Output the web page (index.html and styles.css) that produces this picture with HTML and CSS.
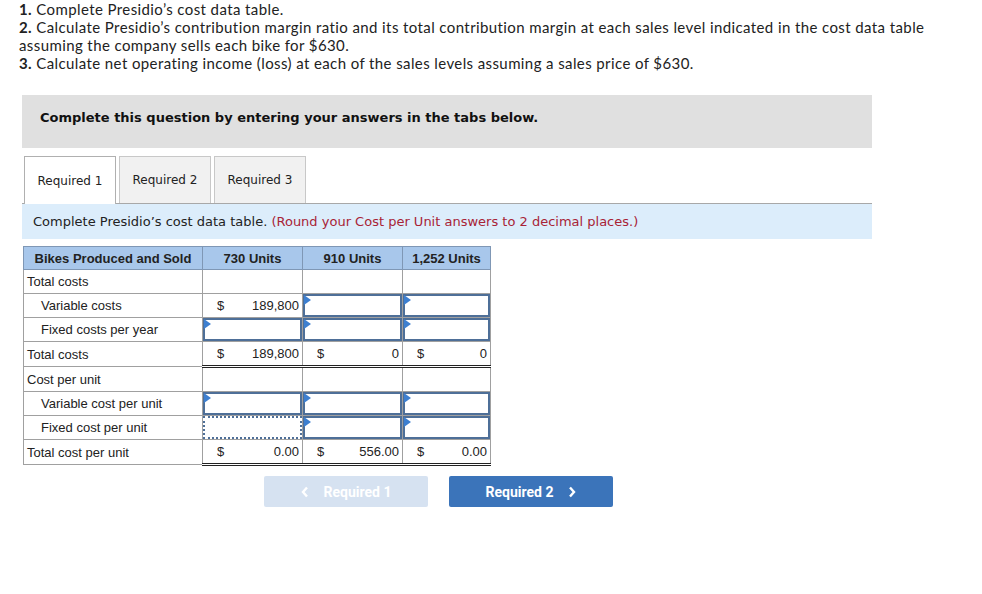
FILE: index.html
```html
<!DOCTYPE html>
<html>
<head>
<meta charset="utf-8">
<link rel="stylesheet" href="styles.css">
</head>
<body>
<div class="intro">
  <p><b>1.</b> Complete Presidio’s cost data table.</p>
  <p><b>2.</b> Calculate Presidio’s contribution margin ratio and its total contribution margin at each sales level indicated in the cost data table assuming the company sells each bike for $630.</p>
  <p><b>3.</b> Calculate net operating income (loss) at each of the sales levels assuming a sales price of $630.</p>
</div>
<div class="panel">Complete this question by entering your answers in the tabs below.</div>
<div class="tabs">
  <div class="tab active">Required 1</div>
  <div class="tab">Required 2</div>
  <div class="tab">Required 3</div>
</div>
<div class="instr">Complete Presidio’s cost data table. <span class="red">(Round your Cost per Unit answers to 2 decimal places.)</span></div>
<table class="grid">
  <thead>
    <tr><th class="lbl">Bikes Produced and Sold</th><th>730 Units</th><th>910 Units</th><th>1,252 Units</th></tr>
  </thead>
  <tbody>
    <tr><td class="lbl">Total costs</td><td></td><td></td><td></td></tr>
    <tr><td class="lbl ind">Variable costs</td><td class="val"><span class="cur">$</span><span class="num">189,800</span></td><td class="in"><div class="box"><i class="tri"></i></div></td><td class="in"><div class="box"><i class="tri"></i></div></td></tr>
    <tr><td class="lbl ind">Fixed costs per year</td><td class="in"><div class="box"><i class="tri"></i></div></td><td class="in"><div class="box"><i class="tri"></i></div></td><td class="in"><div class="box"><i class="tri"></i></div></td></tr>
    <tr class="tot"><td class="lbl">Total costs</td><td class="val"><span class="cur">$</span><span class="num">189,800</span></td><td class="val"><span class="cur">$</span><span class="num">0</span></td><td class="val"><span class="cur">$</span><span class="num">0</span></td></tr>
    <tr><td class="lbl">Cost per unit</td><td></td><td></td><td></td></tr>
    <tr><td class="lbl ind">Variable cost per unit</td><td class="in"><div class="box"><i class="tri"></i></div></td><td class="in"><div class="box"><i class="tri"></i></div></td><td class="in"><div class="box"><i class="tri"></i></div></td></tr>
    <tr><td class="lbl ind">Fixed cost per unit</td><td class="in"><div class="box dot"></div></td><td class="in"><div class="box"><i class="tri"></i></div></td><td class="in"><div class="box"><i class="tri"></i></div></td></tr>
    <tr class="tot"><td class="lbl">Total cost per unit</td><td class="val"><span class="cur">$</span><span class="num">0.00</span></td><td class="val"><span class="cur">$</span><span class="num">556.00</span></td><td class="val"><span class="cur">$</span><span class="num">0.00</span></td></tr>
  </tbody>
</table>
<div class="nav">
  <div class="btn prev"><svg class="chev l" width="8" height="12" viewBox="0 0 8 12"><path d="M6 1.5 L2 6 L6 10.5" fill="none" stroke="#fff" stroke-width="2.4"/></svg>Required 1</div>
  <div class="btn next">Required 2<svg class="chev r" width="8" height="12" viewBox="0 0 8 12"><path d="M2 1.5 L6 6 L2 10.5" fill="none" stroke="#fff" stroke-width="2.4"/></svg></div>
</div>
</body>
</html>
```
FILE: styles.css
```css
body {
  margin: 0;
  background: #fff;
  color: #222;
  font-family: "Open Sans", "Liberation Sans", sans-serif;
}
.intro {
  padding: 0 0 0 19px;
  font-family: Lato, "Open Sans", sans-serif;
  font-size: 15px;
  letter-spacing: 0.4px;
  line-height: 18px;
  width: 950px;
  box-sizing: border-box;
}
.intro p { margin: 0; }
.intro b { font-weight: 700; }
.panel {
  margin: 23px 0 0 22px;
  width: 850px;
  height: 53px;
  box-sizing: border-box;
  background: #e0e0e0;
  padding: 15px 0 0 18px;
  font-family: "DejaVu Sans", Verdana, sans-serif;
  font-weight: bold;
  font-size: 13px;
  color: #111;
}
.tabs {
  display: flex;
  gap: 3px;
  margin: 8px 0 0 24px;
  height: 47px;
}
.tab {
  width: 92px;
  box-sizing: border-box;
  border: 1px solid #c8c8c8;
  border-bottom: none;
  background: #f1f1f1;
  font-family: "DejaVu Sans", Verdana, sans-serif;
  font-size: 12px;
  display: flex;
  align-items: center;
  justify-content: center;
  color: #222;
}
.tab.active {
  background: #fff;
  border-color: #b0b0b0;
  position: relative;
  z-index: 1;
  height: 48px;
}
.instr {
  margin-left: 22px;
  width: 850px;
  height: 36px;
  box-sizing: border-box;
  border-top: 1px solid #a8a8a8;
  background: #dcedfb;
  padding: 10px 0 0 11px;
  font-family: "DejaVu Sans", Verdana, sans-serif;
  font-size: 13px;
  color: #222;
}
.instr .red { color: #a82336; }
.grid {
  margin: 7px 0 0 23px;
  border-collapse: collapse;
  font-family: "Liberation Sans", Arial, sans-serif;
  font-size: 13px;
  color: #222;
}
.grid th {
  background: #a8c7eb;
  border: 1px solid #7f97b5;
  height: 22px;
  padding: 0;
  font-weight: bold;
  width: 99px;
  color: #222;
}
.grid th.lbl { width: 178px; }
.grid th:last-child { width: 87px; }
.grid td {
  border: 1px solid #a0a0a0;
  height: 23px;
  padding: 0;
}
.grid td.lbl { padding-left: 3px; text-align: left; }
.grid td.ind { padding-left: 17px; }
.grid td.val {
  padding: 0 3px 0 14px;
}
.val .cur { float: left; }
.val .num { float: right; }
.grid tr.tot td.val {
  border-top: 1px solid #222;
  border-bottom: 3px double #222;
}
.grid td.in { position: relative; }
.box {
  position: absolute;
  inset: 0;
  border: 2px solid #4e6f98;
}
.box.dot { border: 2px dotted #4e6f98; }
.tri {
  position: absolute;
  left: -1px;
  top: -1px;
  width: 0;
  height: 0;
  border-top: 5px solid transparent;
  border-bottom: 5px solid transparent;
  border-left: 7px solid #3d7fd0;
}
.nav {
  display: flex;
  gap: 21px;
  margin: 10px 0 0 264px;
}
.btn {
  width: 164px;
  height: 31px;
  border-radius: 2px;
  display: flex;
  align-items: center;
  justify-content: center;
  font-family: Roboto, "Liberation Sans", sans-serif;
  font-weight: bold;
  font-size: 14px;
  color: #fff;
}
.btn.prev { background: #d6e2f1; }
.btn.next { background: #3b74ba; }
.chev.l { margin-right: 15px; }
.chev.r { margin-left: 15px; }
```
